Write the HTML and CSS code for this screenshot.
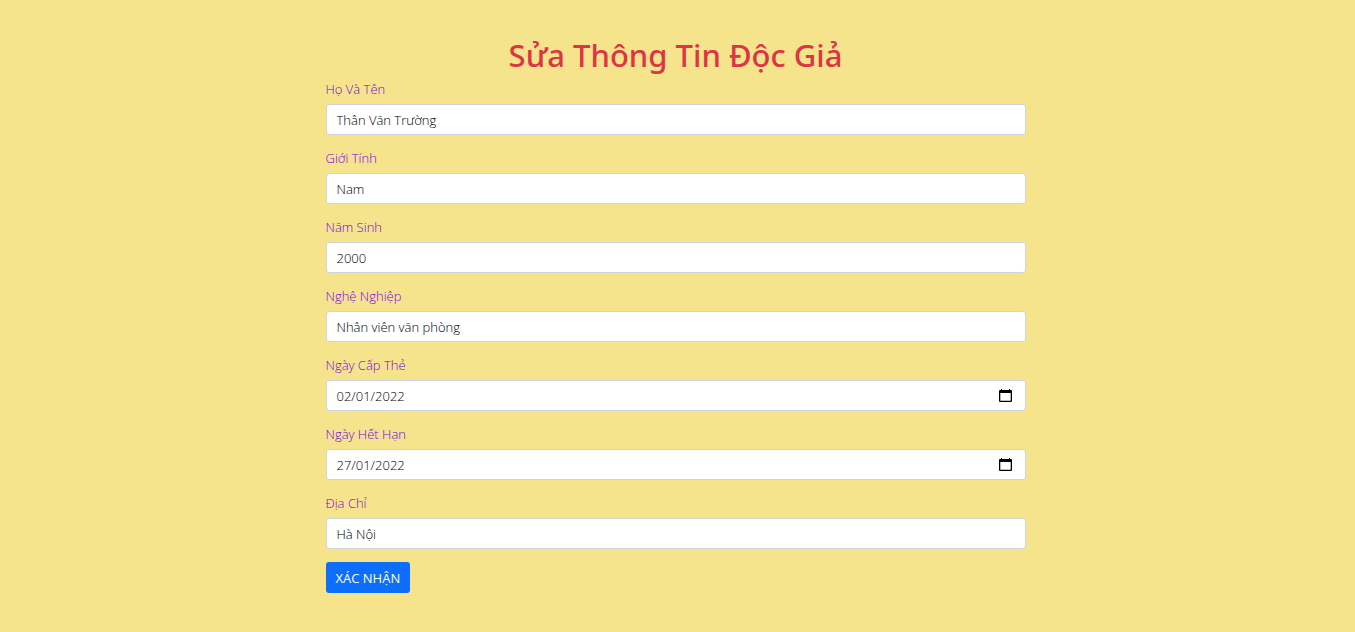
FILE: index.html
```html
<!DOCTYPE html>
<html lang="vi">
<head>
<meta charset="utf-8">
<meta name="viewport" content="width=device-width, initial-scale=1">
<title>Sửa Thông Tin Độc Giả</title>
<link rel="stylesheet" href="styles.css">
</head>
<body>
<main class="page">
  <h1 class="title">Sửa Thông Tin Độc Giả</h1>
  <form class="form">
    <div class="field">
      <label class="label" for="name">Họ Và Tên</label>
      <input class="control" id="name" type="text" value="Thân Văn Trường">
    </div>
    <div class="field">
      <label class="label" for="gender">Giới Tính</label>
      <input class="control" id="gender" type="text" value="Nam">
    </div>
    <div class="field">
      <label class="label" for="birth">Năm Sinh</label>
      <input class="control" id="birth" type="text" value="2000">
    </div>
    <div class="field">
      <label class="label" for="job">Nghệ Nghiệp</label>
      <input class="control" id="job" type="text" value="Nhân viên văn phòng">
    </div>
    <div class="field">
      <label class="label" for="issued">Ngày Cấp Thẻ</label>
      <div class="control date">
        <input class="date-input" id="issued" type="text" value="02/01/2022">
        <button class="date-button" type="button" aria-label="Chọn ngày cấp thẻ">
          <svg class="date-icon" viewBox="0 0 13 14"><path d="M2 0h1v1h7V0h1v1h1q1 0 1 1v10q0 1-1 1H1q-1 0-1-1V2q0-1 1-1h1zM1.300 4v7.700h10.400V4z" fill-rule="evenodd"/></svg>
        </button>
      </div>
    </div>
    <div class="field">
      <label class="label" for="expires">Ngày Hết Hạn</label>
      <div class="control date">
        <input class="date-input" id="expires" type="text" value="27/01/2022">
        <button class="date-button" type="button" aria-label="Chọn ngày hết hạn">
          <svg class="date-icon" viewBox="0 0 13 14"><path d="M2 0h1v1h7V0h1v1h1q1 0 1 1v10q0 1-1 1H1q-1 0-1-1V2q0-1 1-1h1zM1.300 4v7.700h10.400V4z" fill-rule="evenodd"/></svg>
        </button>
      </div>
    </div>
    <div class="field">
      <label class="label" for="address">Địa Chỉ</label>
      <input class="control" id="address" type="text" value="Hà Nội">
    </div>
    <button class="submit" type="submit">XÁC NHẬN</button>
  </form>
</main>
</body>
</html>
```
FILE: styles.css
```css
* {
  box-sizing: border-box;
}

body {
  margin: 0;
  background: #f6e48c;
  color: #000;
  font: 300 13px/20px "Segoe UI", "Open Sans", "Noto Sans", sans-serif;
}

.page {
  max-width: 724px;
  margin: 0 auto;
  padding: 35px 14px 40px 10px;
}

.title {
  margin: 0 0 4px;
  color: #dc3545;
  font-family: "Segoe UI", "Noto Sans", sans-serif;
  font-size: 31px;
  font-weight: 500;
  line-height: 40px;
  text-align: center;
}

.form {
  display: flex;
  flex-direction: column;
  align-items: flex-start;
}

.field {
  display: flex;
  flex-direction: column;
  gap: 5px;
  width: 100%;
  margin-bottom: 13px;
}

.label {
  color: #7a00e6;
}

.control {
  width: 100%;
  height: 31px;
  padding: 0 10px;
  border: 1px solid #ced4da;
  border-radius: 3px;
  background: #fff;
  color: inherit;
  font: inherit;
}

.date {
  display: flex;
  align-items: center;
}

.date-input {
  flex: 1;
  min-width: 0;
  padding: 0;
  border: 0;
  outline: 0;
  background: none;
  color: inherit;
  font: inherit;
}

.date-button {
  display: flex;
  padding: 0 3px;
  border: 0;
  background: none;
}

.date-icon {
  width: 13px;
  height: 14px;
}

.submit {
  height: 31px;
  padding: 0 10px;
  border: 0;
  border-radius: 3px;
  background: #0d6efd;
  color: #fff;
  font: inherit;
  font-weight: 400;
}
```
